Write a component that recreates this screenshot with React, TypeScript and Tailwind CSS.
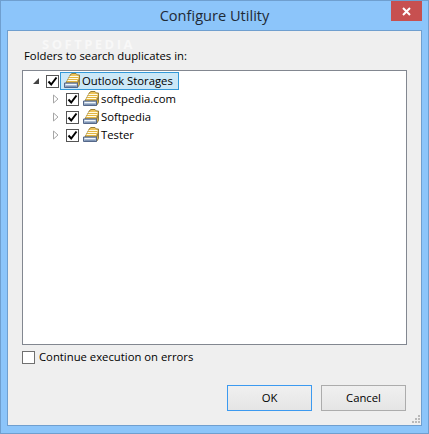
const font = { fontFamily: '"Open Sans", "Noto Sans", sans-serif' };

function Folder() {
  return (
    <svg width="18" height="16" viewBox="0 0 18 16" className="shrink-0">
      <path d="M7.5 1.5 L9 0.5 H13 L14.5 2 H16.5 V6 L14.5 10 H3 Z" fill="#eec45a" stroke="#9a7f35" />
      <path d="M6.5 3.5 H15.5 M5.5 5.5 H15 M4.5 7.5 H14 " stroke="#fffbe6" />
      <path d="M6 4.5 H15 M5 6.5 H14.5 M4 8.5 H13.5" stroke="#e2b540" />
      <path d="M14.5 10 L16.5 6 V11.5 L14.5 14.5 Z" fill="#d9b24a" stroke="#8d7a45" />
      <path d="M1.5 10 H14.5 V14.5 H1.5 Z" fill="#a9bbd2" stroke="#55688a" />
      <path d="M2.5 11.5 H13.5" stroke="#f3f7fb" />
      <path d="M2.5 13.5 H13.5" stroke="#7f95b5" />
    </svg>
  );
}

function Check({ checked = true }: { checked?: boolean }) {
  return (
    <span className="flex h-[13px] w-[13px] shrink-0 items-center justify-center border border-[#555] bg-white">
      {checked && (
        <svg width="11" height="11" viewBox="0 0 11 11">
          <path d="M1.5 5.5 L4.2 8.5 L9.5 1.5" fill="none" stroke="#000" strokeWidth="2" />
        </svg>
      )}
    </span>
  );
}

function Row({ label }: { label: string }) {
  return (
    <div className="flex h-[18px] items-center">
      <svg width="8" height="10" viewBox="0 0 8 10" className="ml-[29px] shrink-0">
        <path d="M1.5 1 L6 5 L1.5 9 Z" fill="#fff" stroke="#a6a6a6" />
      </svg>
      <span className="ml-[6px]"><Check /></span>
      <span className="ml-[3px]"><Folder /></span>
      <span className="ml-[1px] text-[11.3px] text-black">{label}</span>
    </div>
  );
}

export default function App() {
  return (
    <div style={font} className="relative flex h-[434px] w-[429px] flex-col overflow-hidden border border-[#6f9fcf] bg-[#8cc5fa] text-black">
      <div className="relative flex h-[29px] shrink-0 items-center justify-center pt-[1px] text-[14.6px] text-[#1f2a36]">
        Configure Utility
        <div className="absolute right-[6px] top-0 flex h-[20px] w-[31px] items-center justify-center bg-[#c75050]">
          <svg width="9" height="9" viewBox="0 0 9 9">
            <path d="M1 1 L8 8 M8 1 L1 8" stroke="#fff" strokeWidth="2" />
          </svg>
        </div>
      </div>
      <div className="relative mx-[6px] flex h-[396px] flex-col border border-[#6f9fcf] bg-[#efefef] px-[14px]">
        <div className="pointer-events-none absolute left-[34px] top-[9px] text-[13px] leading-[9px] font-bold tracking-[2.5px] text-[#f8f8f8]">SOFTPEDIA</div>
        <div className="relative mt-[19px] h-[20px] pl-[2px] text-[11.3px] leading-[12px] text-black">Folders to search duplicates in:</div>
        <div className="h-[275px] border border-[#828790] bg-white pt-[1px]">
          <div className="flex h-[18px] items-center">
            <svg width="8" height="8" viewBox="0 0 8 8" className="ml-[9px] shrink-0">
              <path d="M7 1 V7 H1 Z" fill="#444" />
            </svg>
            <span className="ml-[6px]"><Check /></span>
            <div className="ml-[1px] flex h-[18px] w-[119px] items-center gap-[1px] border border-[#3399d8] bg-[#cce8f7] pl-[2px]">
              <Folder />
              <span className="text-[11.3px] text-black">Outlook Storages</span>
            </div>
          </div>
          <Row label="softpedia.com" />
          <Row label="Softpedia" />
          <Row label="Tester" />
        </div>
        <div className="mt-[5px] flex h-[14px] items-center gap-[4px]">
          <span className="h-[13px] w-[13px] border border-[#707070] bg-white" />
          <span className="text-[11.3px] text-black">Continue execution on errors</span>
        </div>
        <div className="mt-[21px] flex justify-end gap-[9px] pr-[1px]">
          <button className="h-[26px] w-[85px] border border-[#3c9af0] bg-gradient-to-b from-[#f0f0f0] to-[#e5e5e5] text-[11.3px] text-black">OK</button>
          <button className="h-[26px] w-[85px] border border-[#acacac] bg-gradient-to-b from-[#f0f0f0] to-[#e5e5e5] text-[11.3px] text-black">Cancel</button>
        </div>
        <svg width="9" height="9" viewBox="0 0 9 9" className="absolute bottom-[1px] right-[1px]">
          <path d="M7 0h2v2H7z M4 3h2v2H4z M7 3h2v2H7z M1 6h2v2H1z M4 6h2v2H4z M7 6h2v2H7z" fill="#b9b9b9" />
        </svg>
      </div>
    </div>
  );
}
